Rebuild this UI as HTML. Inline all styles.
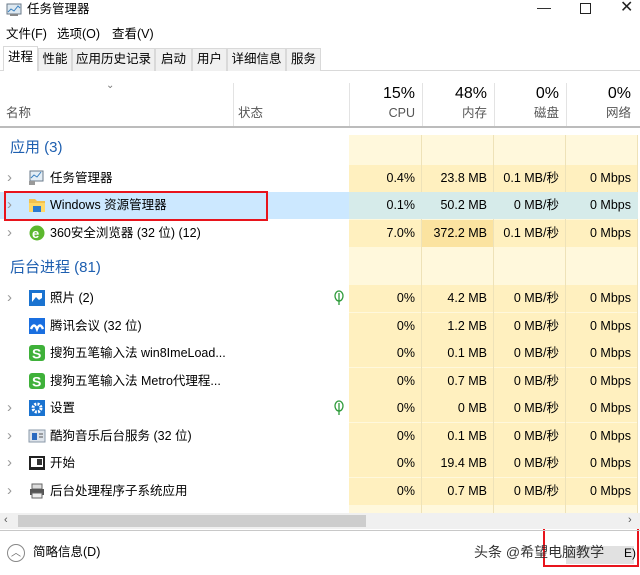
<!DOCTYPE html>
<html><head><meta charset="utf-8"><style>
*{margin:0;padding:0;box-sizing:border-box}
body{width:640px;height:575px;background:#fff;font-family:"Liberation Sans","Noto Sans CJK SC",sans-serif;font-size:12.5px;line-height:15px;color:#000;position:relative;overflow:hidden}
.a{position:absolute;white-space:nowrap}
.tab{position:absolute;top:48px;height:23px;border:1px solid #d9d9d9;border-bottom:none;background:#f0f0f0;font-size:12.5px;line-height:21px;text-align:center}
.col{position:absolute;top:135px;height:378px;background:#fff8dc;border-right:1px solid #eee2b8}
.cell{position:absolute;height:27px;background:#fff0bf;border-right:1px solid #eee2b8}
.v{position:absolute;text-align:right;font-size:12.5px;line-height:15px;white-space:nowrap}
.arrow{position:absolute;left:7px;color:#999;font-size:15px;line-height:15px}
</style></head><body>
<svg class="a" style="left:6px;top:3px" width="16" height="14"><rect x="1" y="1" width="14" height="10" fill="#dde8f0" stroke="#6a7a8a"/><polyline points="2,9 5,6 8,8 12,3 14,5" fill="none" stroke="#3a80c0"/><rect x="4" y="11" width="8" height="2" fill="#888"/></svg>
<div class="a" style="left:27px;top:2px">任务管理器</div>
<div class="a" style="left:537px;top:0;font-size:14px;color:#222">—</div>
<div class="a" style="left:580px;top:3px;width:11px;height:11px;border:1px solid #222"></div>
<div class="a" style="left:620px;top:0px;font-size:16px;color:#222">✕</div>
<div class="a" style="left:6px;top:27px">文件(F)</div>
<div class="a" style="left:57px;top:27px">选项(O)</div>
<div class="a" style="left:112px;top:27px">查看(V)</div>
<div class="a" style="left:0;top:70px;width:640px;height:1px;background:#d9d9d9"></div>
<div class="tab" style="left:3px;top:46px;width:35px;height:25px;background:#fff">进程</div>
<div class="tab" style="left:38px;width:34px">性能</div>
<div class="tab" style="left:72px;width:83px">应用历史记录</div>
<div class="tab" style="left:155px;width:37px">启动</div>
<div class="tab" style="left:192px;width:35px">用户</div>
<div class="tab" style="left:227px;width:59px">详细信息</div>
<div class="tab" style="left:286px;width:35px">服务</div>
<div class="a" style="left:106px;top:78px;color:#777;font-size:10px">⌄</div>
<div class="a" style="left:233px;top:83px;width:1px;height:44px;background:#e3e3e3"></div>
<div class="a" style="left:349px;top:83px;width:1px;height:44px;background:#e3e3e3"></div>
<div class="a" style="left:422px;top:83px;width:1px;height:44px;background:#e3e3e3"></div>
<div class="a" style="left:494px;top:83px;width:1px;height:44px;background:#e3e3e3"></div>
<div class="a" style="left:566px;top:83px;width:1px;height:44px;background:#e3e3e3"></div>
<div class="a" style="left:6px;top:106px;color:#555">名称</div>
<div class="a" style="left:238px;top:106px;color:#555">状态</div>
<div class="v" style="left:349px;width:66px;top:85px;font-size:16px;line-height:18px">15%</div>
<div class="v" style="left:422px;width:65px;top:85px;font-size:16px;line-height:18px">48%</div>
<div class="v" style="left:494px;width:65px;top:85px;font-size:16px;line-height:18px">0%</div>
<div class="v" style="left:566px;width:65px;top:85px;font-size:16px;line-height:18px">0%</div>
<div class="v" style="left:349px;width:66px;top:106px;color:#555">CPU</div>
<div class="v" style="left:422px;width:65px;top:106px;color:#555">内存</div>
<div class="v" style="left:494px;width:65px;top:106px;color:#555">磁盘</div>
<div class="v" style="left:566px;width:65px;top:106px;color:#555">网络</div>
<div class="a" style="left:0;top:126px;width:640px;height:2px;background:#bcbcbc"></div>
<div class="col" style="left:349px;width:73px"></div>
<div class="col" style="left:422px;width:72px"></div>
<div class="col" style="left:494px;width:72px"></div>
<div class="col" style="left:566px;width:72px"></div>
<div class="a" style="left:10px;top:139px;font-size:15px;line-height:18px;color:#1e5fb0">应用 (3)</div>
<div class="a" style="left:10px;top:259px;font-size:15px;line-height:18px;color:#1e5fb0">后台进程 (81)</div>
<div class="a" style="left:0;top:192px;width:349px;height:27px;background:#cce8ff"></div>
<div class="a" style="left:349px;top:192px;width:289px;height:27px;background:#d6ebea"></div>
<div class="a" style="left:4px;top:191px;width:264px;height:30px;border:2px solid #e8141c"></div>
<div class="a" style="left:543px;top:523px;width:96px;height:44px;border:2px solid #e8141c"></div>
<div id="rows"></div>
<div class="a" style="left:0;top:513px;width:640px;height:16px;background:#f0f0f0"></div>
<div class="a" style="left:18px;top:515px;width:348px;height:12px;background:#cdcdcd"></div>
<div class="a" style="left:4px;top:513px;color:#555;font-size:11px">‹</div>
<div class="a" style="left:628px;top:513px;color:#555;font-size:11px">›</div>
<div class="a" style="left:0;top:530px;width:640px;height:1px;background:#c8c8c8"></div>
<div class="a" style="left:7px;top:544px;width:18px;height:18px;border:1px solid #888;border-radius:50%;text-align:center;font-size:10px;line-height:18px;color:#666">︿</div>
<div class="a" style="left:33px;top:545px">简略信息(D)</div>
<div class="a" style="left:566px;top:546px;width:68px;height:18px;background:#e1e1e1"></div>
<div class="a" style="left:474px;top:544px;font-size:14px;line-height:17px;color:#333">头条 @希望电脑教学</div>
<div class="a" style="left:624px;top:546px;font-size:12px">E)</div>
<script>
var rows=[
[178,1,'tm','任务管理器','0.4%','23.8 MB','0.1 MB/秒','0 Mbps',0],
[205,1,'fd','Windows 资源管理器','0.1%','50.2 MB','0 MB/秒','0 Mbps',2],
[233,1,'ie','360安全浏览器 (32 位) (12)','7.0%','372.2 MB','0.1 MB/秒','0 Mbps',3],
[298,1,'ph','照片 (2)','0%','4.2 MB','0 MB/秒','0 Mbps',1],
[326,0,'mt','腾讯会议 (32 位)','0%','1.2 MB','0 MB/秒','0 Mbps',0],
[353,0,'sg','搜狗五笔输入法 win8ImeLoad...','0%','0.1 MB','0 MB/秒','0 Mbps',0],
[381,0,'sg','搜狗五笔输入法 Metro代理程...','0%','0.7 MB','0 MB/秒','0 Mbps',0],
[408,1,'st','设置','0%','0 MB','0 MB/秒','0 Mbps',1],
[436,1,'kg','酷狗音乐后台服务 (32 位)','0%','0.1 MB','0 MB/秒','0 Mbps',0],
[463,1,'ks','开始','0%','19.4 MB','0 MB/秒','0 Mbps',0],
[491,1,'pr','后台处理程序子系统应用','0%','0.7 MB','0 MB/秒','0 Mbps',0]];
var icons={
tm:'<rect x="2" y="2" width="13" height="10" fill="#e4eef6" stroke="#6a7a8a"/><polyline points="3,9 6,6 9,8 13,3" fill="none" stroke="#3a80c0"/><rect x="1" y="12" width="6" height="4" fill="#999"/>',
fd:'<path d="M1 3h6l2 2h8v11H1z" fill="#f2c14e"/><rect x="1" y="7" width="16" height="9" fill="#ffd866"/><rect x="5" y="10" width="8" height="6" fill="#2a7ad0"/>',
ie:'<circle cx="9" cy="9" r="7.5" fill="#5cb82e"/><text x="4" y="14" font-size="13" font-weight="bold" fill="#fff" font-family="Liberation Sans">e</text>',
ph:'<rect x="1" y="1" width="16" height="16" fill="#1a73d0"/><rect x="4" y="4" width="10" height="9" fill="#fff"/><path d="M4 13l4-5 3 3 3-2v4z" fill="#1a73d0"/>',
mt:'<rect x="1" y="1" width="16" height="16" fill="#1a6fe0"/><path d="M3 12q3-7 6 0q3-7 6 0" fill="none" stroke="#fff" stroke-width="2.5"/>',
sg:'<rect x="1" y="1" width="16" height="16" rx="3" fill="#3fb13a"/><text x="4" y="14.5" font-size="14" font-weight="bold" fill="#fff" font-family="Liberation Sans">S</text>',
st:'<rect x="1" y="1" width="16" height="16" fill="#1a73d0"/><circle cx="9" cy="9" r="4" fill="none" stroke="#fff" stroke-width="3" stroke-dasharray="2 1.2"/><circle cx="9" cy="9" r="1.5" fill="#1a73d0"/>',
kg:'<rect x="1" y="3" width="16" height="12" fill="#dde3ea" stroke="#8a98a8"/><rect x="4" y="6" width="5" height="7" fill="#2a6ac0"/><line x1="11" y1="7" x2="15" y2="7" stroke="#555"/><line x1="11" y1="10" x2="15" y2="10" stroke="#555"/>',
ks:'<rect x="1" y="2" width="16" height="14" fill="#222"/><rect x="3" y="4" width="12" height="9" fill="#fff"/><rect x="9" y="5" width="5" height="6" fill="#333"/>',
pr:'<rect x="4" y="2" width="10" height="5" fill="#ddd" stroke="#666"/><rect x="2" y="7" width="14" height="6" fill="#555"/><rect x="4" y="11" width="10" height="5" fill="#eee" stroke="#666"/>'};
var h='';
rows.forEach(function(r){var t=r[0]-13;
 if(r[8]!=2){[[349,73],[422,72],[494,72],[566,72]].forEach(function(c,i){var bg=(r[8]==3&&i==1)?'#fbe3a0':'#fff0bf';h+='<div class="cell" style="left:'+c[0]+'px;width:'+c[1]+'px;top:'+t+'px;background:'+bg+'"></div>';});}
 if(r[1])h+='<div class="arrow" style="top:'+(t+5)+'px">›</div>';
 h+='<svg class="a" style="left:28px;top:'+(t+4)+'px" width="18" height="18">'+icons[r[2]]+'</svg>';
 h+='<div class="a" style="left:50px;top:'+(t+6)+'px">'+r[3]+'</div>';
 if(r[8]==1)h+='<svg class="a" style="left:333px;top:'+(t+5)+'px" width="12" height="16"><ellipse cx="6" cy="6" rx="4" ry="5" fill="none" stroke="#2e9a3a" stroke-width="1.3"/><line x1="6" y1="3" x2="6" y2="15" stroke="#2e9a3a" stroke-width="1.3"/></svg>';
 [[349,66,4],[422,65,5],[494,65,6],[566,65,7]].forEach(function(c){h+='<div class="v" style="left:'+c[0]+'px;width:'+c[1]+'px;top:'+(t+6)+'px">'+r[c[2]]+'</div>';});
});
document.getElementById('rows').innerHTML=h;
</script>
</body></html>
